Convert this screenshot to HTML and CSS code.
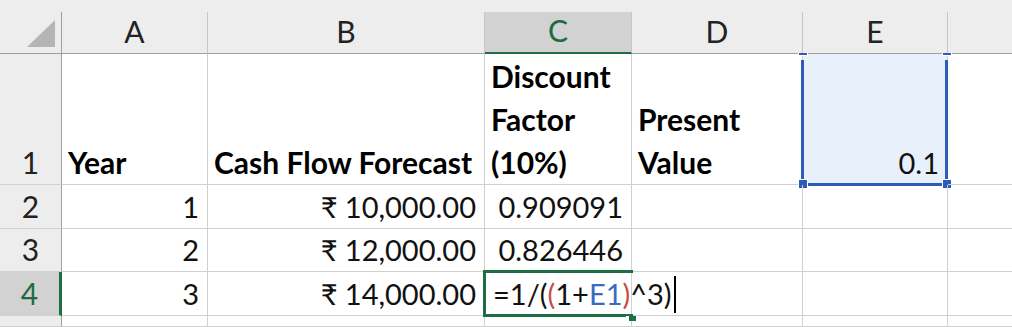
FILE: index.html
```html
<!DOCTYPE html>
<html lang="en">
<head>
    <meta charset="UTF-8">
    <title>Discount Factor Sheet</title>
    <link rel="stylesheet" href="styles.css">
</head>
<body>
    <div class="sheet">
        <!-- column headers -->
        <div class="hdr corner"><span class="tri"></span></div>
        <div class="hdr col">A</div>
        <div class="hdr col">B</div>
        <div class="hdr col col-active">C</div>
        <div class="hdr col">D</div>
        <div class="hdr col">E</div>
        <div class="hdr col last"></div>

        <!-- row 1 -->
        <div class="hdr row">1</div>
        <div class="cell bold">Year</div>
        <div class="cell bold">Cash Flow Forecast</div>
        <div class="cell bold">Discount<br>Factor<br>(10%)</div>
        <div class="cell bold">Present<br>Value</div>
        <div class="cell num selected">0.1
            <span class="handle h-tl"></span>
            <span class="handle h-tr"></span>
            <span class="handle h-bl"></span>
            <span class="handle h-br"></span>
        </div>
        <div class="cell last"></div>

        <!-- row 2 -->
        <div class="hdr row">2</div>
        <div class="cell num">1</div>
        <div class="cell num">₹ 10,000.00</div>
        <div class="cell num">0.909091</div>
        <div class="cell"></div>
        <div class="cell"></div>
        <div class="cell last"></div>

        <!-- row 3 -->
        <div class="hdr row">3</div>
        <div class="cell num">2</div>
        <div class="cell num">₹ 12,000.00</div>
        <div class="cell num">0.826446</div>
        <div class="cell"></div>
        <div class="cell"></div>
        <div class="cell last"></div>

        <!-- row 4 -->
        <div class="hdr row row-active">4</div>
        <div class="cell num">3</div>
        <div class="cell num">₹ 14,000.00</div>
        <div class="cell active">
            <span class="formula">=1/(<span class="ref-paren">(</span>1+<span class="ref">E1</span><span class="ref-paren">)</span>^3)</span><span class="caret"></span>
            <span class="fill-handle"></span>
        </div>
        <div class="cell"></div>
        <div class="cell"></div>
        <div class="cell last"></div>

        <!-- row 5 -->
        <div class="hdr row"></div>
        <div class="cell"></div>
        <div class="cell"></div>
        <div class="cell"></div>
        <div class="cell"></div>
        <div class="cell"></div>
        <div class="cell last"></div>
    </div>
</body>
</html>
```

FILE: styles.css
```css
body {
    margin: 0;
    background-color: #ededed;
    font-family: 'Lato', 'Noto Sans', sans-serif;
    overflow: hidden;
}
.sheet {
    display: grid;
    grid-template-columns: 62px 146px 277px 147px 171px 145px 1fr;
    grid-template-rows: 42px 131px 44px 43px 44px 11px;
    margin-top: 12px;
    width: 1012px;
    background-color: #fff;
}
.hdr {
    background-color: #ededed;
    color: #222;
    font-size: 30px;
    line-height: 43px;
    display: flex;
    align-items: flex-end;
    justify-content: center;
    box-sizing: border-box;
    border-right: 1px solid #c6c6c6;
    border-bottom: 1px solid #9f9f9f;
}
.hdr.row {
    border-bottom: 1px solid #d0d0d0;
    border-right: 1px solid #9f9f9f;
}
.hdr.last {
    border-right: none;
}
.corner {
    justify-content: flex-end;
    padding: 0 6px 6px 0;
    border-right: 1px solid #9f9f9f;
}
.tri {
    width: 28px;
    height: 27px;
    background-color: #b5b5b5;
    clip-path: polygon(100% 0, 100% 100%, 0 100%);
}
.col-active {
    background-color: #d2d2d2;
    color: #1e6b3f;
    border-bottom: 2px solid #1f6e43;
}
.row-active {
    background-color: #d2d2d2;
    color: #1e6b3f;
    border-right: 3px solid #1f6e43 !important;
}
.cell {
    position: relative;
    font-size: 29px;
    line-height: 43px;
    color: #111;
    display: flex;
    align-items: flex-end;
    padding: 0 6px;
    box-sizing: border-box;
    border-right: 1px solid #d0d0d0;
    border-bottom: 1px solid #d0d0d0;
    white-space: nowrap;
}
.cell.last {
    border-right: none;
}
.bold {
    font-size: 30px;
    font-weight: bold;
    color: #000;
}
.num {
    justify-content: flex-end;
    padding-right: 8px;
}
.selected {
    background-color: #e8f0fb;
}
.selected::before {
    content: '';
    position: absolute;
    left: -2px;
    right: -1px;
    top: 6px;
    bottom: -2px;
    border: 3px solid #2b5cb8;
    border-top: none;
}
.handle {
    position: absolute;
    width: 8px;
    height: 8px;
    background-color: #2b5cb8;
    border: 1px solid #fff;
}
.h-tl { left: -5px; top: -1px; height: 2px; border-top: none; }
.h-tr { right: -5px; top: -1px; height: 2px; border-top: none; }
.h-bl { left: -5px; bottom: -5px; }
.h-br { right: -5px; bottom: -5px; }
.active {
    overflow: visible;
    z-index: 2;
    padding-left: 8px;
}
.active::before {
    content: '';
    position: absolute;
    left: -2px;
    right: -2px;
    top: -2px;
    bottom: -2px;
    border: 3px solid #1f6e43;
    border-right: none;
}
.formula {
    flex-shrink: 0;
}
.ref-paren {
    color: #c0504d;
}
.ref {
    color: #3a6bc0;
}
.caret {
    flex-shrink: 0;
    display: inline-block;
    width: 2px;
    height: 37px;
    margin: 0 0 2px 2px;
    background-color: #000;
}
.fill-handle {
    position: absolute;
    right: -5px;
    bottom: -6px;
    width: 7px;
    height: 5px;
    background-color: #1f6e43;
    border-left: 3px solid #fff;
}
```
